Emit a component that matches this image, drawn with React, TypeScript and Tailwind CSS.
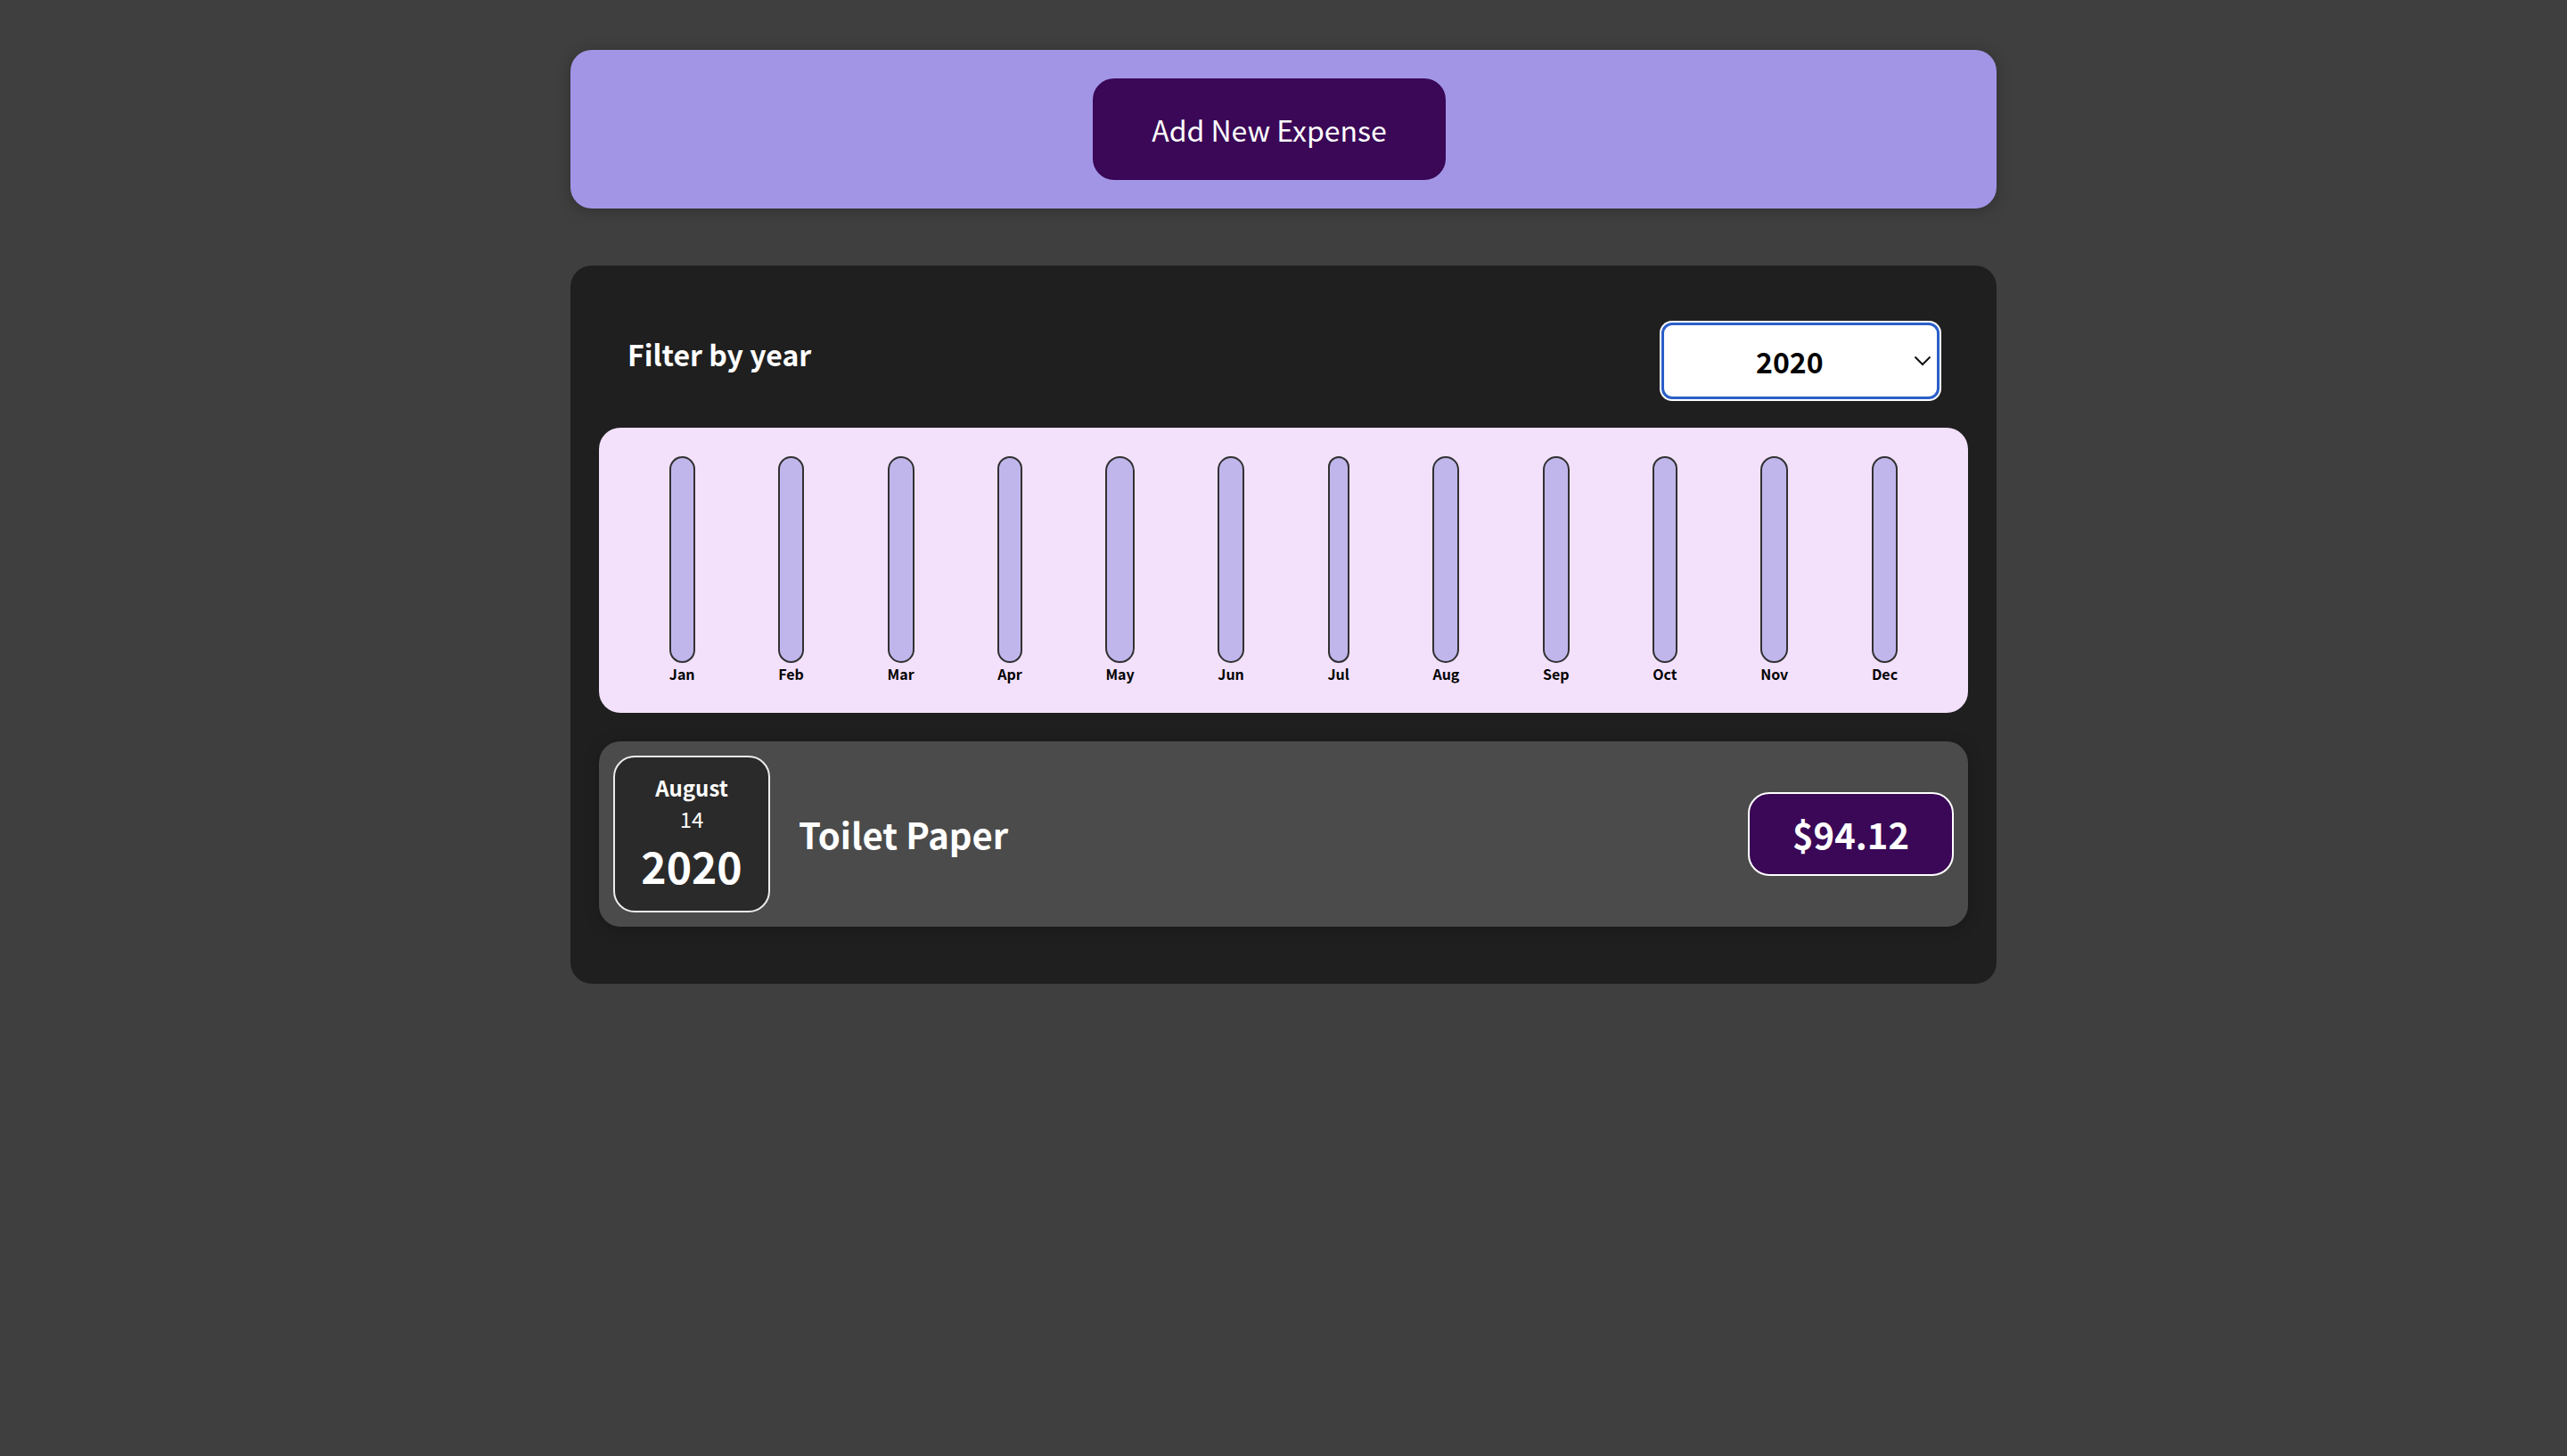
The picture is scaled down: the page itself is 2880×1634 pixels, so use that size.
import React from "react";

const months = ["Jan", "Feb", "Mar", "Apr", "May", "Jun", "Jul", "Aug", "Sep", "Oct", "Nov", "Dec"];

function ChartBar({ label }: { label: string }) {
  return (
    <div className="flex h-full flex-col items-center">
      <div className="flex h-full w-full flex-col justify-end overflow-hidden rounded-[24px] border-2 border-[#313131] bg-[#c1b6ec]">
        <div className="w-full bg-[#4826b9]" style={{ height: "0%" }} />
      </div>
      <div className="text-center text-[16px] font-bold leading-[normal] text-black">{label}</div>
    </div>
  );
}

export default function App() {
  return (
    <div className="min-h-screen w-full bg-[#3f3f3f] pt-[56px] font-['Noto_Sans_CJK_JP',sans-serif] leading-[normal]">
      <div className="mx-auto w-[1600px] rounded-[24px] bg-[#a295e6] p-[32px] text-center shadow-[0_2px_16px_rgba(0,0,0,0.25)]">
        <button className="mr-[32px] rounded-[24px] border-2 border-[#3a0856] bg-[#3a0856] px-[64px] py-[32px] text-[32px] leading-[normal] text-white">
          Add New Expense
        </button>
      </div>

      <div className="mx-auto mt-[64px] w-[1600px] rounded-[24px] bg-[#1f1f1f] p-[32px]">
        <div className="px-[32px] text-white">
          <div className="my-[32px] flex w-full items-center justify-between">
            <label className="mb-[16px] text-[32px] font-bold leading-[normal]">Filter by year</label>
            <div className="relative flex h-[86px] w-[312px] items-center rounded-[12px] border-[3px] border-[#2a5fc8] bg-white pl-[103px] shadow-[0_0_0_2px_#ffffff]">
              <span className="text-[32px] font-bold leading-[normal] text-black">2020</span>
              <svg
                className="absolute right-[6px] top-1/2 -translate-y-1/2"
                width="20"
                height="12"
                viewBox="0 0 20 12"
                fill="none"
              >
                <polyline points="1.5,1.5 10,10 18.5,1.5" stroke="#111" strokeWidth="2" fill="none" />
              </svg>
            </div>
          </div>
        </div>

        <div className="flex h-[320px] justify-around rounded-[24px] bg-[#f3e0fb] p-[32px] text-center">
          {months.map((m) => (
            <ChartBar key={m} label={m} />
          ))}
        </div>

        <div className="my-[32px] flex items-center justify-between rounded-[24px] bg-[#4b4b4b] p-[16px] shadow-[0_2px_16px_rgba(0,0,0,0.25)]">
          <div className="flex h-[176px] w-[176px] flex-col items-center justify-center rounded-[24px] border-2 border-[#ececec] bg-[#2a2a2a] text-white">
            <div className="text-[24px] font-bold leading-[normal]">August</div>
            <div className="text-[24px] leading-[normal]">14</div>
            <div className="text-[48px] font-bold leading-[normal]">2020</div>
          </div>
          <div className="flex flex-1 flex-row items-center justify-start gap-[32px]">
            <h2 className="mx-[32px] flex-1 text-[40px] font-bold leading-[normal] text-white">Toilet Paper</h2>
            <div className="rounded-[24px] border-2 border-white bg-[#3a0856] px-[48px] py-[16px] text-[40px] font-bold leading-[normal] text-white">
              $94.12
            </div>
          </div>
        </div>
      </div>
    </div>
  );
}
